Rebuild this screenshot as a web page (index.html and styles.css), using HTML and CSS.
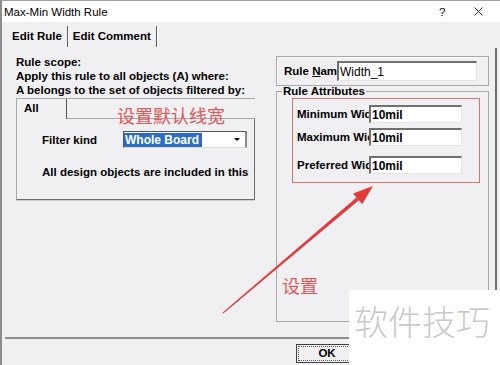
FILE: index.html
```html
<!DOCTYPE html>
<html lang="en">

<head>
    <meta charset="UTF-8">
    <title>Max-Min Width Rule</title>
    <link rel="stylesheet" href="styles.css">
</head>

<body>
    <div class="dialog">
        <div class="titlebar">
            <span class="title">Max-Min Width Rule</span>
            <span class="help">?</span>
            <svg class="close" width="9" height="9" viewBox="0 0 9 9">
                <path d="M0.5 0.5L8.5 8.5M8.5 0.5L0.5 8.5" stroke="#333" stroke-width="1" fill="none"/>
            </svg>
        </div>
        <div class="tabs">
            <span class="tab">Edit Rule</span>
            <span class="tab">Edit Comment</span>
        </div>
        <div class="page">
            <div class="scope">
                <p class="scope-line">Rule scope:</p>
                <p class="scope-line">Apply this rule to all objects (A) where:</p>
                <p class="scope-line">A belongs to the set of objects filtered by:</p>
                <div class="filter">
                    <div class="filter-tabs">
                        <span class="filter-tab">All</span>
                        <span class="filter-gap"></span>
                    </div>
                    <div class="filter-body">
                        <div class="filter-row">
                            <span class="filter-label">Filter kind</span>
                            <div class="select">
                                <span class="select-value">Whole Board</span>
                                <span class="select-arrow"></span>
                            </div>
                        </div>
                        <p class="filter-note">All design objects are included in this</p>
                    </div>
                </div>
            </div>
            <div class="rule">
                <div class="name-box">
                    <span class="name-label">Rule <u>N</u>ame</span>
                    <span class="field name-field">Width_1</span>
                </div>
                <fieldset class="attrs">
                    <legend>Rule Attributes</legend>
                    <div class="attr-rows">
                        <div class="attr-row row-min">
                            <span class="attr-label">Minimum Width</span>
                            <span class="field">10mil</span>
                        </div>
                        <div class="attr-row row-max">
                            <span class="attr-label">Maximum Width</span>
                            <span class="field">10mil</span>
                        </div>
                        <div class="attr-row row-pref">
                            <span class="attr-label">Preferred Width</span>
                            <span class="field">10mil</span>
                        </div>
                    </div>
                </fieldset>
            </div>
        </div>
        <div class="footer">
            <span class="ok"><span class="ok-inner">OK</span></span>
        </div>
    </div>

    <!-- annotations drawn over the screenshot -->
    <div class="mark-rect"></div>
    <span class="note note-top">设置默认线宽</span>
    <span class="note note-set">设置</span>
    <svg class="arrow" width="500" height="365" viewBox="0 0 500 365">
        <polygon points="222.7,312.6 356.5,197.5 353.2,193.6 373,186 362.2,204.2 358.9,200.3 223.3,313.4" fill="#e03a3a"/>
    </svg>
    <div class="watermark">软件技巧</div>
</body>

</html>
```

FILE: styles.css
```css
* {
    padding: 0px;
    margin: 0px;
    box-sizing: border-box;
}

body {
    position: relative;
    width: 500px;
    height: 365px;
    overflow: hidden;
    background: #f0eff2;
}

.dialog {
    width: 500px;
    height: 365px;
    border-left: 2px solid #8c8c8c;
    border-top: 1px solid #a0a0a0;
    background: #f0eff2;
    display: flex;
    flex-direction: column;
    font: bold 11.5px "Liberation Sans", Arial, sans-serif;
    color: #000;
}

/* title bar */
.titlebar {
    height: 21px;
    background: #fff;
    display: flex;
    align-items: center;
    padding-left: 2px;
    font-weight: normal;
}

.title {
    flex: 1;
}

.help {
    width: 7px;
}

.close {
    margin-left: 28px;
    margin-right: 17px;
}

/* tabs */
.tabs {
    height: 26px;
    display: flex;
    align-items: flex-start;
    padding: 4px 0 0 5px;
}

.tab {
    height: 21px;
    line-height: 21px;
    padding: 0 5px;
    border-right: 1px solid #5a5a5a;
    box-shadow: 1px 0 0 #fff;
}

.page {
    flex: 1;
    display: flex;
    padding-top: 7px;
    margin-right: 3px;
    border-right: 2px solid #6e6e6e;
}

/* left side: rule scope */
.scope {
    margin-left: 14px;
    width: 239px;
}

.scope-line {
    line-height: 14px;
    white-space: nowrap;
}

.filter {
    margin-top: 1px;
}

.filter-tabs {
    height: 21px;
    display: flex;
    border-top: 1px solid #a8a8a8;
}

.filter-tab {
    width: 51px;
    padding-left: 7px;
    line-height: 19px;
    border-left: 1px solid #a8a8a8;
    border-right: 1px solid #555;
}

.filter-gap {
    flex: 1;
    border-bottom: 1px solid #a8a8a8;
}

.filter-body {
    height: 81px;
    padding: 12px 0 0 25px;
    border-left: 1px solid #a8a8a8;
    border-right: 1px solid #6a6a6a;
    border-bottom: 1px solid #6a6a6a;
    box-shadow: 0 1px 0 #d0d0d0;
    overflow: hidden;
}

.filter-row {
    display: flex;
    align-items: center;
    height: 17px;
}

.filter-label {
    width: 81px;
}

.select {
    width: 124px;
    height: 17px;
    display: flex;
    align-items: center;
    background: #fff;
    border-top: 1px solid #555;
    border-left: 1px solid #555;
    border-right: 2px solid #8a8a8a;
    border-bottom: 1px solid #ddd;
}

.select-value {
    background: #2a6ec6;
    color: #fff;
    font-size: 12px;
    line-height: 14px;
    padding: 0 3px 0 1px;
}

.select-arrow {
    margin-left: auto;
    margin-right: 5px;
    width: 0;
    height: 0;
    border-left: 3px solid transparent;
    border-right: 3px solid transparent;
    border-top: 3px solid #000;
}

.filter-note {
    margin-top: 17px;
    line-height: 14px;
    white-space: nowrap;
}

/* right side: rule name and attributes */
.rule {
    margin-left: 21px;
    width: 213px;
}

.name-box {
    margin-top: 1px;
    height: 30px;
    display: flex;
    align-items: center;
    padding-left: 7px;
    border: 1px solid #a8a8a8;
    box-shadow: inset 1px 1px 0 #fff;
}

.name-label {
    width: 53px;
    overflow: hidden;
    white-space: nowrap;
}

.field {
    height: 18px;
    line-height: 16px;
    padding-left: 1px;
    background: #fff;
    font-size: 12px;
    border-top: 2px solid #707070;
    border-left: 2px solid #707070;
    border-right: 1px solid #e4e4e4;
    border-bottom: 1px solid #e4e4e4;
    white-space: nowrap;
}

.name-field {
    width: 140px;
    height: 20px;
    line-height: 18px;
    font-weight: normal;
}

.attrs {
    height: 237px;
    border: 1px solid #a8a8a8;
    padding: 0;
    margin-top: -1px;
}

.attrs legend {
    margin-left: 5px;
    padding: 0 1px;
    line-height: 13px;
}

.attr-rows {
    padding-left: 20px;
}

.attr-row {
    display: flex;
    align-items: center;
}

.row-min {
    margin-top: 7px;
}

.row-max {
    margin-top: 5px;
}

.row-pref {
    margin-top: 10px;
}

.attr-label {
    width: 72px;
    overflow: hidden;
    white-space: nowrap;
}

.attr-row .field {
    width: 93px;
}

/* bottom buttons */
.footer {
    height: 28px;
    margin-left: 3px;
    border-top: 2px solid #8e8e8e;
    padding: 5px 0 0 291px;
}

.ok {
    display: block;
    width: 62px;
    height: 19px;
    padding: 1px;
    border: 1px solid #404040;
}

.ok-inner {
    display: block;
    height: 15px;
    line-height: 13px;
    text-align: center;
    border: 1px dotted #555;
}

/* annotations */
.mark-rect {
    position: absolute;
    left: 292px;
    top: 98px;
    width: 188px;
    height: 85px;
    border: 1px solid #d4736f;
}

.note {
    position: absolute;
    font: 18px/1 "Noto Sans CJK SC", sans-serif;
    color: #dc5a5a;
}

.note-top {
    left: 117px;
    top: 106px;
}

.note-set {
    left: 282px;
    top: 276px;
}

.arrow {
    position: absolute;
    left: 0px;
    top: 0px;
}

.watermark {
    position: absolute;
    left: 349px;
    top: 290px;
    width: 151px;
    height: 75px;
    background: #fff;
    padding: 14px 0 0 5px;
    font: 300 34px/1 "Noto Sans CJK SC", sans-serif;
    color: #cacaca;
    white-space: nowrap;
}
```
